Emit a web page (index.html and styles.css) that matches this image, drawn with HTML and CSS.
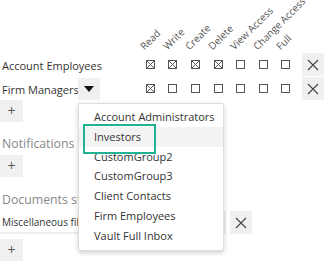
FILE: index.html
```html
<!DOCTYPE html>
<html>
<head>
<meta charset="utf-8">
<link rel="stylesheet" href="styles.css">
</head>
<body>
<div class="page">
  <div class="perm">
    <div class="row head">
      <div class="label-cell"></div>
      <div class="cell"><span class="hd">Read</span></div>
      <div class="cell"><span class="hd">Write</span></div>
      <div class="cell"><span class="hd">Create</span></div>
      <div class="cell"><span class="hd">Delete</span></div>
      <div class="cell"><span class="hd">View Access</span></div>
      <div class="cell"><span class="hd">Change Access</span></div>
      <div class="cell"><span class="hd">Full</span></div>
    </div>
    <div class="row">
      <div class="label-cell"><span class="lbl">Account Employees</span></div>
      <div class="cell"><span class="cb on"></span></div>
      <div class="cell"><span class="cb on"></span></div>
      <div class="cell"><span class="cb on"></span></div>
      <div class="cell"><span class="cb on"></span></div>
      <div class="cell"><span class="cb"></span></div>
      <div class="cell"><span class="cb"></span></div>
      <div class="cell"><span class="cb"></span></div>
      <button class="xbtn"><svg width="12" height="12" viewBox="0 0 12 12"><path d="M1 1L11 11M11 1L1 11" stroke="#444" stroke-width="1.1" fill="none"/></svg></button>
    </div>
    <div class="row">
      <div class="label-cell"><span class="lbl fixed">Firm Managers</span><button class="toggle"><svg width="10" height="6" viewBox="0 0 10 6"><path d="M0 0H10L5 6Z" fill="#111"/></svg></button></div>
      <div class="cell"><span class="cb on"></span></div>
      <div class="cell"><span class="cb"></span></div>
      <div class="cell"><span class="cb"></span></div>
      <div class="cell"><span class="cb"></span></div>
      <div class="cell"><span class="cb"></span></div>
      <div class="cell"><span class="cb"></span></div>
      <div class="cell"><span class="cb"></span></div>
      <button class="xbtn"><svg width="12" height="12" viewBox="0 0 12 12"><path d="M1 1L11 11M11 1L1 11" stroke="#444" stroke-width="1.1" fill="none"/></svg></button>
    </div>
  </div>
  <button class="plus">+</button>

  <h3 class="section">Notifications</h3>
  <button class="plus">+</button>

  <h3 class="section sec2">Documents storage</h3>
  <div class="docrow">
    <div class="docbox">Miscellaneous files</div>
    <button class="xbtn"><svg width="12" height="12" viewBox="0 0 12 12"><path d="M1 1L11 11M11 1L1 11" stroke="#444" stroke-width="1.1" fill="none"/></svg></button>
  </div>
  <button class="plus">+</button>

  <ul class="menu">
    <li>Account Administrators</li>
    <li class="active">Investors</li>
    <li>CustomGroup2</li>
    <li>CustomGroup3</li>
    <li>Client Contacts</li>
    <li>Firm Employees</li>
    <li>Vault Full Inbox</li>
  </ul>
</div>
</body>
</html>
```

FILE: styles.css
```css
* { box-sizing: border-box; }
html, body { margin: 0; padding: 0; background: #fff; }
body {
  font-family: "Open Sans", "DejaVu Sans", sans-serif;
  color: #333;
  width: 324px;
  height: 262px;
  overflow: hidden;
}
.page {
  position: relative;
}
.perm { display: flex; flex-direction: column; gap: 1px; }
.row {
  display: flex;
  align-items: center;
  height: 23px;
}
.row.head {
  height: 52px;
  align-items: flex-end;
}
.label-cell {
  width: 139px;
  flex: none;
  display: flex;
  align-items: center;
  padding-left: 2px;
}
.lbl { font-size: 11px; color: #333; white-space: nowrap; padding-top: 1px; }
.lbl.fixed { width: 76px; }
.toggle {
  width: 22px;
  height: 22px;
  border: 0;
  padding: 0;
  background: #f0f0f0;
  display: flex;
  align-items: center;
  justify-content: center;
}
.cell {
  width: 22.6px;
  flex: none;
  display: flex;
  justify-content: center;
  align-items: center;
}
.row.head .cell {
  justify-content: flex-start;
  padding-left: 7px;
  height: 52px;
  align-items: flex-end;
}
.hd {
  display: block;
  flex: none;
  white-space: nowrap;
  font-size: 10px;
  line-height: 12px;
  color: #555;
  transform-origin: 0 100%;
  transform: rotate(-45deg);
}
.cb {
  width: 9px;
  height: 9px;
  border: 1px solid #555;
  display: block;
}
.cb.on {
  background:
    linear-gradient(45deg, transparent calc(50% - 0.6px), #555 calc(50% - 0.6px), #555 calc(50% + 0.6px), transparent calc(50% + 0.6px)),
    linear-gradient(-45deg, transparent calc(50% - 0.6px), #555 calc(50% - 0.6px), #555 calc(50% + 0.6px), transparent calc(50% + 0.6px));
}
.xbtn {
  flex: none;
  margin-left: 5px;
  width: 22px;
  height: 23px;
  border: 0;
  padding: 0;
  background: #f0f0f0;
  display: flex;
  align-items: center;
  justify-content: center;
}
.plus {
  display: flex;
  align-items: center;
  justify-content: center;
  width: 23px;
  height: 22px;
  border: 0;
  padding: 0;
  background: #f0f0f0;
  color: #555;
  font-family: "Open Sans", sans-serif;
  font-size: 14px;
  line-height: 1;
}
.section {
  margin: 13px 0 2px 2px;
  font-weight: normal;
  font-size: 12.3px;
  line-height: 18px;
  color: #888;
}
.section.sec2 { margin-top: 14px; }
.docrow {
  display: flex;
  align-items: center;
  height: 23px;
  margin-bottom: 5px;
}
.docrow .xbtn { margin-left: 4px; }
.docbox {
  width: 226px;
  height: 23px;
  padding-left: 2px;
  font-size: 10px;
  line-height: 22px;
  border-bottom: 2px solid #eee;
  border-right: 2px solid #eee;
  color: #333;
  white-space: nowrap;
  overflow: hidden;
}
.menu {
  position: absolute;
  left: 78px;
  top: 103px;
  width: 146px;
  margin: 0;
  padding: 3px 0 4px;
  list-style: none;
  background: #fff;
  border: 1px solid #ddd;
  border-radius: 2px;
  box-shadow: 0 2px 5px rgba(0,0,0,0.18);
}
.menu li {
  font-size: 11px;
  line-height: 19.8px;
  padding-left: 15px;
  color: #333;
  white-space: nowrap;
}
.menu li.active {
  background: #f3f3f3;
  position: relative;
}
.menu li.active::after {
  content: "";
  position: absolute;
  left: 4px;
  top: -3px;
  width: 69px;
  height: 26px;
  border: 2px solid #1fb393;
}
```
